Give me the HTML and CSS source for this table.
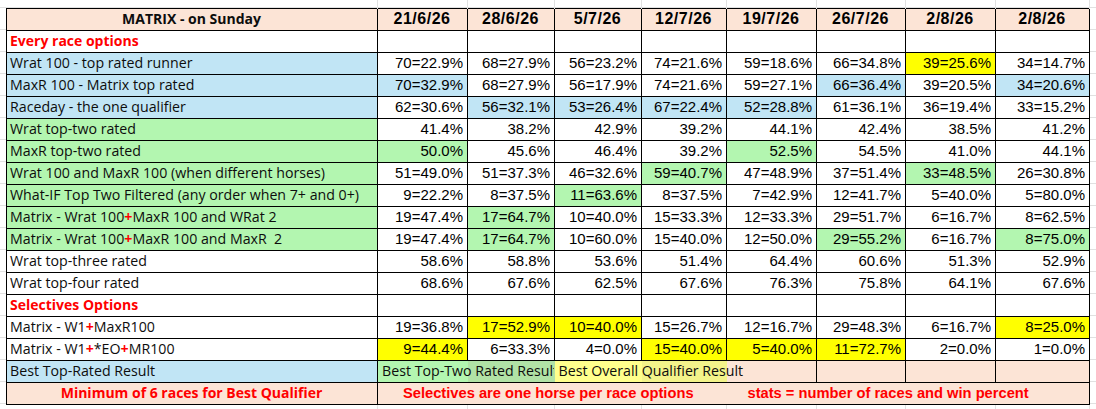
FILE: index.html
```html
<!DOCTYPE html>
<html lang="en">
<head>
<meta charset="utf-8">
<title>MATRIX - on Sunday</title>
<link rel="stylesheet" href="styles.css">
</head>
<body>
<div class="sheet">
<table class="grid">
  <colgroup>
    <col class="c-lab">
    <col class="c90"><col class="c87"><col class="c87"><col class="c85">
    <col class="c90"><col class="c89"><col class="c90"><col class="c94">
  </colgroup>
  <tr class="ghost ghost-top"><td></td><td></td><td></td><td></td><td></td><td></td><td></td><td></td><td></td></tr>
  <tr class="hd">
    <td class="lab">MATRIX - on Sunday</td>
    <td>21/6/26</td><td>28/6/26</td><td>5/7/26</td><td>12/7/26</td><td>19/7/26</td><td>26/7/26</td><td>2/8/26</td><td>2/8/26</td>
  </tr>
  <tr>
    <td class="lab sec">Every race options</td>
    <td></td><td></td><td></td><td></td><td></td><td></td><td></td><td></td>
  </tr>
  <tr>
    <td class="lab blue">Wrat 100 - top rated runner</td>
    <td>70=22.9%</td><td>68=27.9%</td><td>56=23.2%</td><td>74=21.6%</td><td>59=18.6%</td><td>66=34.8%</td><td class="yel">39=25.6%</td><td>34=14.7%</td>
  </tr>
  <tr>
    <td class="lab blue">MaxR 100 - Matrix top rated</td>
    <td class="blue">70=32.9%</td><td>68=27.9%</td><td>56=17.9%</td><td>74=21.6%</td><td>59=27.1%</td><td class="blue">66=36.4%</td><td>39=20.5%</td><td class="blue">34=20.6%</td>
  </tr>
  <tr>
    <td class="lab blue">Raceday - the one qualifier</td>
    <td>62=30.6%</td><td class="blue">56=32.1%</td><td class="blue">53=26.4%</td><td class="blue">67=22.4%</td><td class="blue">52=28.8%</td><td>61=36.1%</td><td>36=19.4%</td><td>33=15.2%</td>
  </tr>
  <tr>
    <td class="lab green">Wrat top-two rated</td>
    <td>41.4%</td><td>38.2%</td><td>42.9%</td><td>39.2%</td><td>44.1%</td><td>42.4%</td><td>38.5%</td><td>41.2%</td>
  </tr>
  <tr>
    <td class="lab green">MaxR top-two rated</td>
    <td class="green">50.0%</td><td>45.6%</td><td>46.4%</td><td>39.2%</td><td class="green">52.5%</td><td>54.5%</td><td>41.0%</td><td>44.1%</td>
  </tr>
  <tr>
    <td class="lab green">Wrat 100 and MaxR 100 (when different horses)</td>
    <td>51=49.0%</td><td>51=37.3%</td><td>46=32.6%</td><td class="green">59=40.7%</td><td>47=48.9%</td><td>37=51.4%</td><td class="green">33=48.5%</td><td>26=30.8%</td>
  </tr>
  <tr>
    <td class="lab green">What-IF Top Two Filtered (any order when 7+ and 0+)</td>
    <td>9=22.2%</td><td>8=37.5%</td><td class="green">11=63.6%</td><td>8=37.5%</td><td>7=42.9%</td><td>12=41.7%</td><td>5=40.0%</td><td>5=80.0%</td>
  </tr>
  <tr>
    <td class="lab green">Matrix - Wrat 100<span class="plus">+</span>MaxR 100 and WRat 2</td>
    <td>19=47.4%</td><td class="green">17=64.7%</td><td>10=40.0%</td><td>15=33.3%</td><td>12=33.3%</td><td>29=51.7%</td><td>6=16.7%</td><td>8=62.5%</td>
  </tr>
  <tr>
    <td class="lab green">Matrix - Wrat 100<span class="plus">+</span>MaxR 100 and MaxR&nbsp; 2</td>
    <td>19=47.4%</td><td class="green">17=64.7%</td><td>10=60.0%</td><td>15=40.0%</td><td>12=50.0%</td><td class="green">29=55.2%</td><td>6=16.7%</td><td class="green">8=75.0%</td>
  </tr>
  <tr>
    <td class="lab">Wrat top-three rated</td>
    <td>58.6%</td><td>58.8%</td><td>53.6%</td><td>51.4%</td><td>64.4%</td><td>60.6%</td><td>51.3%</td><td>52.9%</td>
  </tr>
  <tr>
    <td class="lab">Wrat top-four rated</td>
    <td>68.6%</td><td>67.6%</td><td>62.5%</td><td>67.6%</td><td>76.3%</td><td>75.8%</td><td>64.1%</td><td>67.6%</td>
  </tr>
  <tr>
    <td class="lab sec">Selectives Options</td>
    <td></td><td></td><td></td><td></td><td></td><td></td><td></td><td></td>
  </tr>
  <tr>
    <td class="lab">Matrix - W1<span class="plus">+</span>MaxR100</td>
    <td>19=36.8%</td><td class="yel">17=52.9%</td><td class="yel">10=40.0%</td><td>15=26.7%</td><td>12=16.7%</td><td>29=48.3%</td><td>6=16.7%</td><td class="yel">8=25.0%</td>
  </tr>
  <tr>
    <td class="lab">Matrix - W1<span class="plus">+</span>*EO<span class="plus">+</span>MR100</td>
    <td class="yel">9=44.4%</td><td>6=33.3%</td><td>4=0.0%</td><td class="yel">15=40.0%</td><td class="yel">5=40.0%</td><td class="yel">11=72.7%</td><td>2=0.0%</td><td>1=0.0%</td>
  </tr>
  <tr class="best">
    <td class="lab blue">Best Top-Rated Result</td>
    <td class="note green"><div class="clip">Best Top-Two Rated Result</div></td>
    <td class="note joined green-dk"></td>
    <td class="note joined yel-lt">Best Overall Qualifier Result</td>
    <td class="note joined yel-md"></td>
    <td class="note joined peach"></td>
    <td class="note peach"></td>
    <td class="note peach"></td>
    <td class="note peach"></td>
  </tr>
  <tr class="foot">
    <td class="lab foot-lab">Minimum of 6 races for Best Qualifier</td>
    <td colspan="4" class="foot-mid">Selectives are one horse per race options</td>
    <td colspan="4" class="foot-end joined">stats = number of races and win percent</td>
  </tr>
  <tr class="ghost ghost-bottom"><td></td><td></td><td></td><td></td><td></td><td></td><td></td><td></td><td></td></tr>
</table>
</div>
</body>
</html>
```
FILE: styles.css
```css
html, body {
  margin: 0;
  padding: 0;
  background: #ffffff;
}

.sheet {
  width: 1096px;
  height: 409px;
  box-sizing: border-box;
  padding-left: 6px;
  overflow: hidden;
  background-image: repeating-linear-gradient(to bottom, #e1e1e1 0, #e1e1e1 1px, transparent 1px, transparent 22px);
  background-position: 0 7px;
  background-size: 100% 100%;
}

.grid {
  border-collapse: collapse;
  table-layout: fixed;
  width: 1083px;
}

.c-lab { width: 371px; }
.c90 { width: 90px; }
.c89 { width: 89px; }
.c87 { width: 87px; }
.c85 { width: 85px; }
.c94 { width: 94px; }

.grid tr { height: 22px; }

.grid td {
  border: 1px solid #000;
  padding: 0 4px 0 3px;
  white-space: nowrap;
  overflow: visible;
  font-family: "Liberation Sans", Arial, sans-serif;
  font-size: 15px;
  line-height: 20px;
  text-align: right;
  color: #000;
  background: #ffffff;
  vertical-align: middle;
}

.grid .lab {
  text-align: left;
  font-family: "Open Sans", "Noto Sans", sans-serif;
  font-size: 14.2px;
  padding-left: 3px;
  color: #0d0d0d;
}

/* header row */
.hd td {
  background: #fce4d6;
  font-weight: bold;
  text-align: center;
  font-size: 16px;
  letter-spacing: 0.5px;
}
.hd td.lab {
  text-align: center;
  font-size: 14px;
  letter-spacing: 0;
}

.grid .sec {
  color: #ff0000;
  font-weight: bold;
  font-size: 14px;
}

.plus {
  color: #ff0000;
  font-weight: bold;
}

.grid .blue { background: #c1e5f5; }
.grid .green { background: #b3f6b0; }
.grid .green-dk { background: #b1e2a6; }
.grid .yel { background: #ffff00; }
.grid .yel-lt { background: #ffff8c; }
.grid .yel-md { background: #f3f38a; }
.grid .peach { background: #fce4d6; }

/* "Best" row: text overflows across borderless neighbours */
.best td.note {
  text-align: left;
  font-family: "Open Sans", "Noto Sans", sans-serif;
  font-size: 14.2px;
  padding-left: 4px;
  color: #0d0d0d;
}
.best .clip {
  width: 172px;
  overflow: hidden;
}
.grid td.joined { border-left-style: hidden; }

/* footer row */
.foot td {
  background: #fce4d6;
  font-weight: bold;
}
.grid .foot td {
  color: #ff0000;
}
.foot td.foot-lab {
  text-align: center;
  font-family: "Open Sans", "Noto Sans", sans-serif;
  font-size: 14px;
}
.foot td.foot-mid {
  text-align: center;
  font-size: 14.7px;
  padding-left: 0;
  padding-right: 8px;
}
.foot td.foot-end {
  text-align: left;
  font-size: 14.7px;
  padding-left: 21px;
}

/* spreadsheet gridlines beyond the table */
.grid tr.ghost-top { height: 8px; }
.grid tr.ghost-bottom { height: 6px; }
.ghost td {
  background: transparent;
  border-top: none;
  border-bottom: none;
  border-left: 1px solid #e1e1e1;
  border-right: 1px solid #e1e1e1;
  padding: 0;
  line-height: 0;
  font-size: 0;
}
.ghost td:first-child { border-left: none; }
```
